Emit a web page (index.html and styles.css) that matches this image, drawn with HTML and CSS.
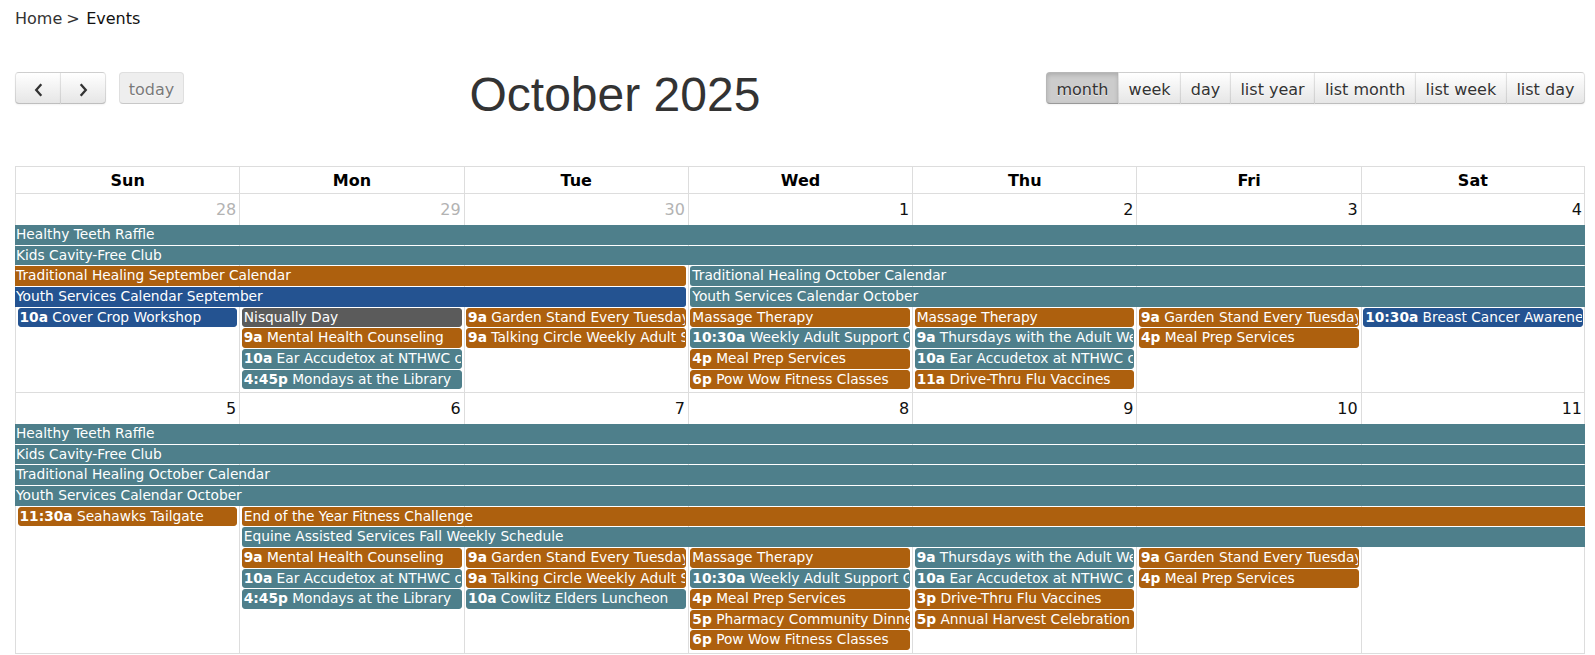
FILE: index.html
```html
<!DOCTYPE html>
<html lang="en">
<head>
<meta charset="utf-8">
<title>Events</title>
<link rel="stylesheet" href="styles.css">
</head>
<body>
<div class="page">
  <div class="crumb"><a class="crumb-link" href="#">Home</a><span class="sep">&gt;</span><span class="crumb-cur">Events</span></div>

  <div class="toolbar">
    <div class="tb-left">
      <div class="grp">
        <button class="btn arrow first" type="button" aria-label="prev"><svg class="chev" width="9" height="14" viewBox="0 0 9 14"><path d="M7.3 1.2 L2.2 7 L7.3 12.8" /></svg></button>
        <button class="btn arrow last" type="button" aria-label="next"><svg class="chev" width="9" height="14" viewBox="0 0 9 14"><path d="M1.7 1.2 L6.8 7 L1.7 12.8" /></svg></button>
      </div>
      <button class="btn today single" type="button">today</button>
    </div>
    <h2 class="title">October 2025</h2>
    <div class="grp tb-right">
      <button class="btn active first" type="button">month</button>
      <button class="btn" type="button">week</button>
      <button class="btn" type="button">day</button>
      <button class="btn" type="button">list year</button>
      <button class="btn" type="button">list month</button>
      <button class="btn" type="button">list week</button>
      <button class="btn last" type="button">list day</button>
    </div>
  </div>

  <div class="cal">
    <div class="head">
      <div class="hd">Sun</div>
      <div class="hd">Mon</div>
      <div class="hd">Tue</div>
      <div class="hd">Wed</div>
      <div class="hd">Thu</div>
      <div class="hd">Fri</div>
      <div class="hd last">Sat</div>
    </div>

    <div class="week w1">
      <div class="bg c1"></div><div class="bg c2"></div><div class="bg c3"></div><div class="bg c4"></div><div class="bg c5"></div><div class="bg c6"></div><div class="bg c7"></div>
      <div class="num c1 other">28</div><div class="num c2 other">29</div><div class="num c3 other">30</div><div class="num c4">1</div><div class="num c5">2</div><div class="num c6">3</div><div class="num c7">4</div>

      <div class="ev teal ns ne r2 c1 s7">Healthy Teeth Raffle</div>
      <div class="ev teal ns ne r3 c1 s7">Kids Cavity-Free Club</div>
      <div class="ev orange ns r4 c1 s3">Traditional Healing September Calendar</div>
      <div class="ev teal ne r4 c4 s4">Traditional Healing October Calendar</div>
      <div class="ev blue ns r5 c1 s3">Youth Services Calendar September</div>
      <div class="ev teal ne r5 c4 s4">Youth Services Calendar October</div>

      <div class="ev blue r6 c1"><span class="tm">10a</span> Cover Crop Workshop</div>
      <div class="ev gray r6 c2">Nisqually Day</div>
      <div class="ev orange r6 c3"><span class="tm">9a</span> Garden Stand Every Tuesday</div>
      <div class="ev orange r6 c4">Massage Therapy</div>
      <div class="ev orange r6 c5">Massage Therapy</div>
      <div class="ev orange r6 c6"><span class="tm">9a</span> Garden Stand Every Tuesday</div>
      <div class="ev blue r6 c7"><span class="tm">10:30a</span> Breast Cancer Awareness</div>

      <div class="ev orange r7 c2"><span class="tm">9a</span> Mental Health Counseling</div>
      <div class="ev orange r7 c3"><span class="tm">9a</span> Talking Circle Weekly Adult Support</div>
      <div class="ev teal r7 c4"><span class="tm">10:30a</span> Weekly Adult Support Group</div>
      <div class="ev teal r7 c5"><span class="tm">9a</span> Thursdays with the Adult Wellness</div>
      <div class="ev orange r7 c6"><span class="tm">4p</span> Meal Prep Services</div>

      <div class="ev teal r8 c2"><span class="tm">10a</span> Ear Accudetox at NTHWC clinic</div>
      <div class="ev orange r8 c4"><span class="tm">4p</span> Meal Prep Services</div>
      <div class="ev teal r8 c5"><span class="tm">10a</span> Ear Accudetox at NTHWC clinic</div>

      <div class="ev teal r9 c2"><span class="tm">4:45p</span> Mondays at the Library</div>
      <div class="ev orange r9 c4"><span class="tm">6p</span> Pow Wow Fitness Classes</div>
      <div class="ev orange r9 c5"><span class="tm">11a</span> Drive-Thru Flu Vaccines</div>
    </div>

    <div class="week w2">
      <div class="bg c1"></div><div class="bg c2"></div><div class="bg c3"></div><div class="bg c4"></div><div class="bg c5"></div><div class="bg c6"></div><div class="bg c7"></div>
      <div class="num c1">5</div><div class="num c2">6</div><div class="num c3">7</div><div class="num c4">8</div><div class="num c5">9</div><div class="num c6">10</div><div class="num c7">11</div>

      <div class="ev teal ns ne r2 c1 s7">Healthy Teeth Raffle</div>
      <div class="ev teal ns ne r3 c1 s7">Kids Cavity-Free Club</div>
      <div class="ev teal ns ne r4 c1 s7">Traditional Healing October Calendar</div>
      <div class="ev teal ns ne r5 c1 s7">Youth Services Calendar October</div>

      <div class="ev orange r6 c1"><span class="tm">11:30a</span> Seahawks Tailgate</div>
      <div class="ev orange ne r6 c2 s6">End of the Year Fitness Challenge</div>
      <div class="ev teal ne r7 c2 s6">Equine Assisted Services Fall Weekly Schedule</div>

      <div class="ev orange r8 c2"><span class="tm">9a</span> Mental Health Counseling</div>
      <div class="ev orange r8 c3"><span class="tm">9a</span> Garden Stand Every Tuesday</div>
      <div class="ev orange r8 c4">Massage Therapy</div>
      <div class="ev teal r8 c5"><span class="tm">9a</span> Thursdays with the Adult Wellness</div>
      <div class="ev orange r8 c6"><span class="tm">9a</span> Garden Stand Every Tuesday</div>

      <div class="ev teal r9 c2"><span class="tm">10a</span> Ear Accudetox at NTHWC clinic</div>
      <div class="ev orange r9 c3"><span class="tm">9a</span> Talking Circle Weekly Adult Support</div>
      <div class="ev teal r9 c4"><span class="tm">10:30a</span> Weekly Adult Support Group</div>
      <div class="ev teal r9 c5"><span class="tm">10a</span> Ear Accudetox at NTHWC clinic</div>
      <div class="ev orange r9 c6"><span class="tm">4p</span> Meal Prep Services</div>

      <div class="ev teal r10 c2"><span class="tm">4:45p</span> Mondays at the Library</div>
      <div class="ev teal r10 c3"><span class="tm">10a</span> Cowlitz Elders Luncheon</div>
      <div class="ev orange r10 c4"><span class="tm">4p</span> Meal Prep Services</div>
      <div class="ev orange r10 c5"><span class="tm">3p</span> Drive-Thru Flu Vaccines</div>

      <div class="ev orange r11 c4"><span class="tm">5p</span> Pharmacy Community Dinner</div>
      <div class="ev orange r11 c5"><span class="tm">5p</span> Annual Harvest Celebration</div>

      <div class="ev orange r12 c4"><span class="tm">6p</span> Pow Wow Fitness Classes</div>
    </div>
  </div>
</div>
</body>
</html>
```

FILE: styles.css
```css
html {
  overflow: hidden;
}
body {
  margin: 0;
  background: #fff;
  color: #111;
  font-family: "DejaVu Sans", Verdana, sans-serif;
  font-size: 16px;
}
.page {
  padding-left: 15px;
  width: 1570px;
}

/* breadcrumb */
.crumb {
  padding-top: 9px;
  height: 19px;
  line-height: 19px;
  color: #333;
  white-space: nowrap;
}
.crumb-link {
  color: #333;
  text-decoration: none;
}
.sep {
  margin: 0 6.5px 0 4px;
  color: #333;
}
.crumb-cur {
  color: #111;
}

/* toolbar */
.toolbar {
  display: flex;
  align-items: flex-start;
  margin-top: 41.5px;
  height: 54px;
}
.tb-left {
  display: flex;
  margin-top: 2.5px;
}
.tb-right {
  margin-top: 2.5px;
}
.grp {
  display: flex;
}
.title {
  flex: 1;
  margin: -1.5px 0 0;
  text-align: center;
  font-family: "Liberation Sans", Arial, sans-serif;
  font-weight: normal;
  font-size: 48px;
  line-height: 54px;
  color: #333;
}
.btn {
  box-sizing: border-box;
  height: 32px;
  margin: 0 0 0 -1px;
  padding: 3px 9.6px 0;
  font-family: "DejaVu Sans", Verdana, sans-serif;
  font-size: 16px;
  line-height: 27px;
  color: #333;
  background-color: #f5f5f5;
  background-image: linear-gradient(to bottom, #ffffff, #e6e6e6);
  border: 1px solid;
  border-color: rgba(0, 0, 0, 0.1) rgba(0, 0, 0, 0.1) rgba(0, 0, 0, 0.25);
  border-radius: 0;
  box-shadow: inset 0 1px 0 rgba(255, 255, 255, 0.2), 0 1px 2px rgba(0, 0, 0, 0.05);
  text-shadow: 0 1px 1px rgba(255, 255, 255, 0.75);
  white-space: nowrap;
  cursor: pointer;
}
.btn.first {
  margin-left: 0;
  border-top-left-radius: 4px;
  border-bottom-left-radius: 4px;
}
.btn.last {
  border-top-right-radius: 4px;
  border-bottom-right-radius: 4px;
}
.btn.arrow {
  width: 46px;
  padding: 0;
  display: flex;
  align-items: center;
  justify-content: center;
}
.chev {
  display: block;
  margin-top: 3px;
}
.chev path {
  fill: none;
  stroke: #333;
  stroke-width: 2.3;
}
.btn.today {
  margin-left: 13px;
  width: 65px;
  padding-left: 0;
  padding-right: 0;
  border-radius: 4px;
  background-color: #e6e6e6;
  background-image: none;
  box-shadow: none;
  opacity: 0.65;
  cursor: default;
}
.btn.active {
  background-color: #cccccc;
  background-image: none;
  box-shadow: inset 0 2px 4px rgba(0, 0, 0, 0.15), 0 1px 2px rgba(0, 0, 0, 0.05);
}

/* calendar */
.cal {
  margin-top: 42.5px;
}
.head {
  display: grid;
  grid-template-columns: repeat(7, minmax(0, 1fr));
  border-top: 1px solid #ddd;
  border-bottom: 1px solid #ddd;
}
.hd {
  height: 26px;
  line-height: 27px;
  text-align: center;
  font-weight: bold;
  font-size: 16px;
  color: #000;
  border-left: 1px solid #ddd;
}
.hd.last {
  border-right: 1px solid #ddd;
}
.week {
  display: grid;
  grid-template-columns: repeat(7, minmax(0, 1fr));
  border-bottom: 1px solid #ddd;
}
.w1 {
  grid-template-rows: 30px repeat(8, 20.667px) 2.667px;
}
.w2 {
  grid-template-rows: 30px repeat(11, 20.667px) 2.667px;
}
.bg {
  grid-row: 1 / -1;
  border-left: 1px solid #ddd;
}
.bg.c7 {
  border-right: 1px solid #ddd;
}
.num {
  grid-row: 1;
  text-align: right;
  padding: 7px 3px 0 0;
  font-size: 16px;
  line-height: 17px;
  color: #111;
}
.num.other {
  color: #b3b3b3;
}

.c1 { grid-column-start: 1; }
.c2 { grid-column-start: 2; }
.c3 { grid-column-start: 3; }
.c4 { grid-column-start: 4; }
.c5 { grid-column-start: 5; }
.c6 { grid-column-start: 6; }
.c7 { grid-column-start: 7; }
.s3 { grid-column-end: span 3; }
.s4 { grid-column-end: span 4; }
.s6 { grid-column-end: span 6; }
.s7 { grid-column-end: span 7; }
.r2 { grid-row: 2; }
.r3 { grid-row: 3; }
.r4 { grid-row: 4; }
.r5 { grid-row: 5; }
.r6 { grid-row: 6; }
.r7 { grid-row: 7; }
.r8 { grid-row: 8; }
.r9 { grid-row: 9; }
.r10 { grid-row: 10; }
.r11 { grid-row: 11; }
.r12 { grid-row: 12; }

.ev {
  box-sizing: border-box;
  height: 19.667px;
  margin: 1px 2px 0 2.5px;
  padding: 0 1px;
  border: 1px solid;
  border-radius: 3px;
  font-size: 13.75px;
  line-height: 17.667px;
  color: #fff;
  white-space: nowrap;
  overflow: hidden;
}
.ev.ns {
  margin-left: 0;
  border-left-width: 0;
  border-top-left-radius: 0;
  border-bottom-left-radius: 0;
}
.ev.ne {
  margin-right: 0;
  border-right-width: 0;
  border-top-right-radius: 0;
  border-bottom-right-radius: 0;
}
.tm {
  font-weight: bold;
}
.teal {
  background: #4e7f8b;
  border-color: #4e7f8b;
}
.orange {
  background: #ad600e;
  border-color: #ad600e;
}
.blue {
  background: #245391;
  border-color: #245391;
}
.gray {
  background: #5b5b5b;
  border-color: #5b5b5b;
}
```
